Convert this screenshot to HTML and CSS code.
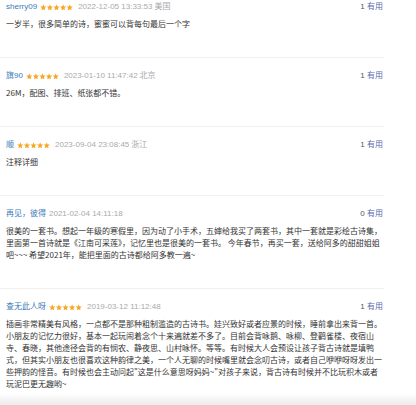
FILE: index.html
```html
<!DOCTYPE html>
<html lang="zh-CN">
<head>
<meta charset="utf-8">
<title>短评</title>
<link rel="stylesheet" href="styles.css">
</head>
<body>
<svg width="0" height="0" class="defs">
  <defs>
    <symbol id="stars5" viewBox="0 0 50 10">
      <g fill="#f7a623">
        <polygon points="5,0.3 6.3,3.5 9.8,3.8 7.1,6 8,9.6 5,7.7 2,9.6 2.9,6 0.2,3.8 3.7,3.5"/>
        <polygon transform="translate(10 0)" points="5,0.3 6.3,3.5 9.8,3.8 7.1,6 8,9.6 5,7.7 2,9.6 2.9,6 0.2,3.8 3.7,3.5"/>
        <polygon transform="translate(20 0)" points="5,0.3 6.3,3.5 9.8,3.8 7.1,6 8,9.6 5,7.7 2,9.6 2.9,6 0.2,3.8 3.7,3.5"/>
        <polygon transform="translate(30 0)" points="5,0.3 6.3,3.5 9.8,3.8 7.1,6 8,9.6 5,7.7 2,9.6 2.9,6 0.2,3.8 3.7,3.5"/>
        <polygon transform="translate(40 0)" points="5,0.3 6.3,3.5 9.8,3.8 7.1,6 8,9.6 5,7.7 2,9.6 2.9,6 0.2,3.8 3.7,3.5"/>
      </g>
    </symbol>
  </defs>
</svg>
<div class="comments">
  <div class="item first">
    <div class="head">
      <div class="info">
        <a class="name">sherry09</a>
        <svg class="stars"><use href="#stars5"/></svg>
        <span class="time">2022-12-05 13:33:53</span>
        <span class="loc">美国</span>
      </div>
      <div class="vote"><span class="count">1</span> <a class="useful">有用</a></div>
    </div>
    <p class="text">一岁半，很多简单的诗，蜜蜜可以背每句最后一个字</p>
  </div>
  <div class="item">
    <div class="head">
      <div class="info">
        <a class="name">旗90</a>
        <svg class="stars"><use href="#stars5"/></svg>
        <span class="time">2023-01-10 11:47:42</span>
        <span class="loc">北京</span>
      </div>
      <div class="vote"><span class="count">1</span> <a class="useful">有用</a></div>
    </div>
    <p class="text">26M，配图、排班、纸张都不错。</p>
  </div>
  <div class="item">
    <div class="head">
      <div class="info">
        <a class="name">顺</a>
        <svg class="stars"><use href="#stars5"/></svg>
        <span class="time">2023-09-04 23:08:45</span>
        <span class="loc">浙江</span>
      </div>
      <div class="vote"><span class="count">1</span> <a class="useful">有用</a></div>
    </div>
    <p class="text">注释详细</p>
  </div>
  <div class="item">
    <div class="head">
      <div class="info">
        <a class="name">再见，彼得</a>
        <span class="time">2021-02-04 14:11:18</span>
      </div>
      <div class="vote"><span class="count">0</span> <a class="useful">有用</a></div>
    </div>
    <p class="text">很美的一套书。想起一年级的寒假里，因为动了小手术，五婶给我买了两套书，其中一套就是彩绘古诗集，里面第一首诗就是《江南可采莲》，记忆里也是很美的一套书。 今年春节，再买一套，送给阿多的甜甜姐姐吧~~~ 希望2021年，能把里面的古诗都给阿多教一遍~</p>
  </div>
  <div class="item">
    <div class="head">
      <div class="info">
        <a class="name">查无此人呀</a>
        <svg class="stars"><use href="#stars5"/></svg>
        <span class="time">2019-03-12 11:12:48</span>
      </div>
      <div class="vote"><span class="count">1</span> <a class="useful">有用</a></div>
    </div>
    <p class="text">插画非常精美有风格，一点都不是那种粗制滥造的古诗书。娃兴致好或者应景的时候，睡前拿出来背一首。小朋友的记忆力很好，基本一起玩闹着念个十来遍就差不多了。目前会背咏鹅、咏柳、登鹳雀楼、夜宿山寺、春晓，其他途径会背的有悯农、静夜思、山村咏怀。等等。有时候大人会预设让孩子背古诗就是填鸭式，但其实小朋友也很喜欢这种韵律之美，一个人无聊的时候嘴里就会念叨古诗，或者自己咿咿呀呀发出一些押韵的怪音。有时候也会主动问起"这是什么意思呀妈妈~"对孩子来说，背古诗有时候并不比玩积木或者玩泥巴更无趣哟~</p>
  </div>
</div>
<div class="fade"></div>
</body>
</html>
```
FILE: styles.css
```css
html, body {
  margin: 0;
  padding: 0;
  background: #fff;
}
body {
  font-family: "Liberation Sans", "Noto Sans CJK SC", sans-serif;
  font-size: 8px;
  line-height: 12px;
  color: #333;
  overflow: hidden;
}
.defs {
  position: absolute;
  width: 0;
  height: 0;
}
.comments {
  width: 384px;
}
.item {
  padding: 12px 1px 27px 6px;
  border-bottom: 1px solid #f0f0f0;
}
.item.first {
  padding-top: 1px;
}
.head {
  display: flex;
  justify-content: space-between;
  align-items: center;
  height: 12px;
}
.info {
  display: flex;
  align-items: center;
  white-space: nowrap;
}
.name {
  color: #3b7ab8;
  margin-right: 3px;
}
.stars {
  width: 33px;
  height: 6.8px;
  margin-right: 5px;
}
.time {
  color: #aaa;
  margin-right: 2px;
}
.loc {
  color: #aaa;
}
.vote {
  white-space: nowrap;
}
.count {
  color: #555;
}
.useful {
  color: #5b67ad;
}
.text {
  margin: 5px 0 0 0;
  color: #333;
  font-family: "Noto Sans CJK SC", "Liberation Sans", sans-serif;
  line-height: 12px;
}
.fade {
  position: fixed;
  left: 0;
  right: 0;
  bottom: 0;
  height: 12px;
  background: linear-gradient(to bottom, rgba(240, 240, 240, 0), rgba(236, 236, 236, 1));
  pointer-events: none;
}
```
